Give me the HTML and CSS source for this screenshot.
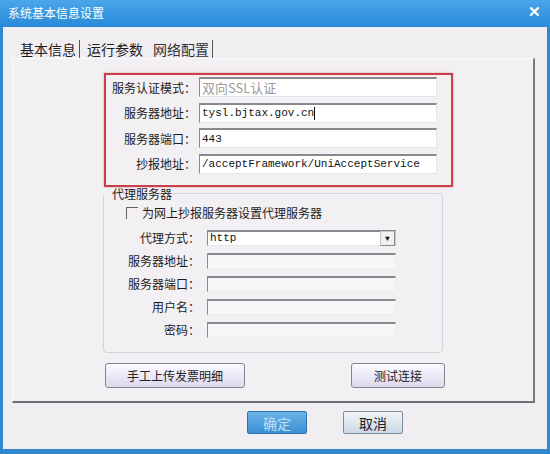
FILE: index.html
```html
<!DOCTYPE html>
<html lang="zh-CN">
<head>
    <meta charset="UTF-8">
    <title>系统基本信息设置</title>
    <link rel="stylesheet" href="styles.css">
</head>
<body>
    <div class="window">
        <div class="titlebar">
            <span class="title">系统基本信息设置</span>
            <span class="close">✕</span>
        </div>

        <div class="client">
            <div class="tabs">
                <span class="tab sep">基本信息</span>
                <span class="tab">运行参数</span>
                <span class="tab active sep">网络配置</span>
            </div>

            <div class="panel">
                <!-- 服务器设置 -->
                <div class="server-box">
                    <label class="lbl">服务认证模式：</label>
                    <div class="field grey">双向SSL认证</div>
                    <label class="lbl">服务器地址：</label>
                    <div class="field mono">tysl.bjtax.gov.cn<span class="caret"></span></div>
                    <label class="lbl">服务器端口：</label>
                    <div class="field mono">443</div>
                    <label class="lbl">抄报地址：</label>
                    <div class="field mono">/acceptFramework/UniAcceptService</div>
                </div>

                <!-- 代理服务器 -->
                <fieldset class="proxy">
                    <legend>代理服务器</legend>
                    <div class="check-row">
                        <span class="checkbox"></span>
                        <span>为网上抄报服务器设置代理服务器</span>
                    </div>
                    <div class="proxy-grid">
                        <label class="lbl">代理方式：</label>
                        <div class="select mono">http<span class="drop">▼</span></div>
                        <label class="lbl">服务器地址：</label>
                        <div class="field small"></div>
                        <label class="lbl">服务器端口：</label>
                        <div class="field small"></div>
                        <label class="lbl">用户名：</label>
                        <div class="field small"></div>
                        <label class="lbl">密码：</label>
                        <div class="field small"></div>
                    </div>
                </fieldset>

                <div class="actions">
                    <button class="btn wide">手工上传发票明细</button>
                    <button class="btn">测试连接</button>
                </div>
            </div>

            <div class="footer">
                <button class="btn-ok">确定</button>
                <button class="btn-cancel">取消</button>
            </div>
        </div>
    </div>
</body>
</html>
```

FILE: styles.css
```css
:root {
    --frame: #2f88cc;
    --body: #f1eef2;
    --text: #1c1c1c;
    --red: #c8404c;
}

body {
    margin: 0;
    font-family: "Noto Sans CJK SC", "Noto Sans", sans-serif;
    color: var(--text);
    background: var(--body);
}

.window {
    width: 550px;
    height: 454px;
    display: flex;
    flex-direction: column;
    background: var(--frame);
}

.titlebar {
    height: 27px;
    display: flex;
    align-items: center;
    justify-content: space-between;
    padding: 0 9px 0 8px;
    background: linear-gradient(to bottom, #4aa6ea, #2a8ad8);
    color: #fff;
}

.title {
    font-size: 12px;
    margin-top: -2px;
}

.close {
    font-size: 15px;
    font-weight: bold;
    margin-top: -6px;
}

.client {
    flex: 1;
    margin: 0 3px 5px 3px;
    background: var(--body);
    display: flex;
    flex-direction: column;
}

/* Вкладки */
.tabs {
    display: flex;
    align-items: center;
    height: 18px;
    margin-top: 13px;
    padding-left: 17px;
    font-size: 14px;
    line-height: 18px;
}

.tab {
    padding-right: 3px;
    margin-right: 7px;
}

.tab.sep {
    border-right: 1px solid #555;
}

.tab.active {
    color: #333;
}

.panel {
    margin: 0 12px 0 9px;
    height: 345px;
    box-sizing: border-box;
    border-top: 1px solid #fbfafc;
    border-left: 1px solid #fbfafc;
    border-right: 2px solid #7a787c;
    border-bottom: 2px solid #6f6d72;
    background: #f3f0f4;
    padding: 14px 0 0 91px;
}

.server-box {
    width: 349px;
    box-sizing: border-box;
    border: 2px solid var(--red);
    box-shadow: 0 0 2px rgba(200, 64, 76, 0.5);
    display: grid;
    grid-template-columns: 90px 238px;
    grid-auto-rows: 20px;
    column-gap: 3px;
    row-gap: 5.5px;
    padding: 2px 0 11px 0;
}

.lbl {
    font-size: 12px;
    text-align: right;
    align-self: center;
    white-space: nowrap;
}

.field {
    background: #fff;
    border-top: 2px solid #8a888c;
    border-left: 1px solid #8a888c;
    border-right: 1px solid #e6e4e8;
    border-bottom: 1px solid #e6e4e8;
    padding-left: 2px;
    display: flex;
    align-items: center;
    font-size: 13px;
    white-space: nowrap;
}

.field.grey {
    color: #9a9a9a;
}

.mono {
    font-family: "Liberation Mono", monospace;
    font-size: 11px;
    color: #111;
}

.caret {
    display: inline-block;
    width: 1px;
    height: 13px;
    background: #111;
}

/* Прокси */
.proxy {
    width: 340px;
    box-sizing: border-box;
    margin: 0 0 0 -1px;
    padding: 4px 0 14px 0;
    border: 1px solid #d6d2da;
    border-radius: 4px;
}

.proxy legend {
    font-size: 12px;
    line-height: 14px;
    padding: 0 0 0 8px;
    margin-left: 0;
}

.check-row {
    display: flex;
    align-items: center;
    height: 16px;
    padding-left: 22px;
    font-size: 12px;
    gap: 4px;
}

.checkbox {
    width: 12px;
    height: 12px;
    box-sizing: border-box;
    border-top: 1px solid #666;
    border-left: 1px solid #666;
}

.proxy-grid {
    display: grid;
    grid-template-columns: 96px 189px;
    grid-auto-rows: 16px;
    column-gap: 7px;
    row-gap: 7px;
    margin-top: 9px;
}

.select {
    background: #fff;
    border-top: 2px solid #8a888c;
    border-left: 1px solid #8a888c;
    border-right: 1px solid #c8c6ca;
    border-bottom: 1px solid #e6e4e8;
    display: flex;
    align-items: center;
    justify-content: space-between;
    padding-left: 2px;
}

.drop {
    width: 13px;
    height: 13px;
    font-size: 8px;
    line-height: 13px;
    text-align: center;
    border: 1px solid #c8c6ca;
    border-bottom-color: #8a888c;
    border-right-color: #8a888c;
    background: #f2f0f3;
}

.field.small {
    background: #f7f6f8;
    border-right-color: #eeedf0;
    border-bottom-color: #eeedf0;
}

/* Кнопки */
.actions {
    width: 340px;
    display: flex;
    justify-content: space-between;
    margin: 10px 0 0 1px;
}

.btn {
    height: 25px;
    width: 94px;
    font-family: inherit;
    font-size: 12px;
    color: #222;
    background: linear-gradient(to bottom, #fbfaff, #ded8ec);
    border: 1px solid #86848e;
    border-radius: 3px;
    padding: 0;
}

.btn.wide {
    width: 140px;
}

.footer {
    display: flex;
    gap: 36px;
    padding: 8px 0 0 244px;
}

.btn-ok,
.btn-cancel {
    width: 60px;
    height: 23px;
    font-family: inherit;
    font-size: 14px;
    padding: 0;
    border-radius: 2px;
}

.btn-ok {
    color: #bfe0f6;
    background: linear-gradient(to bottom, #6cb3e8, #3d90d3);
    border: 1px solid #2f72ae;
}

.btn-cancel {
    color: #222;
    background: linear-gradient(to bottom, #f2f5f9, #cbd8e5);
    border: 1px solid #7d8c9a;
}
```
